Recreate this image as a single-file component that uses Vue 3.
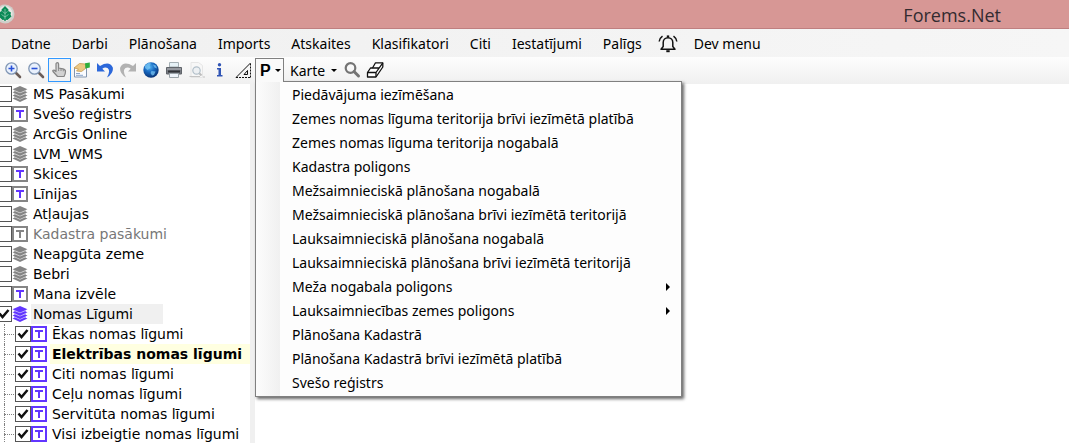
<script setup>
import { ref } from 'vue'

const menus = ['Datne', 'Darbi', 'Plānošana', 'Imports', 'Atskaites', 'Klasifikatori', 'Citi', 'Iestatījumi', 'Palīgs']

const layers = ref([
  { name: 'MS Pasākumi', icon: 'stack' },
  { name: 'Svešo reģistrs', icon: 'text' },
  { name: 'ArcGis Online', icon: 'stack' },
  { name: 'LVM_WMS', icon: 'stack' },
  { name: 'Skices', icon: 'text' },
  { name: 'Līnijas', icon: 'text' },
  { name: 'Atļaujas', icon: 'stack' },
  { name: 'Kadastra pasākumi', icon: 'text', off: true },
  { name: 'Neapgūta zeme', icon: 'stack' },
  { name: 'Bebri', icon: 'stack' },
  { name: 'Mana izvēle', icon: 'text' },
  { name: 'Nomas Līgumi', icon: 'stack', on: true, selected: true },
  { name: 'Ēkas nomas līgumi', icon: 'text', on: true, child: true },
  { name: 'Elektrības nomas līgumi', icon: 'text', on: true, child: true, active: true },
  { name: 'Citi nomas līgumi', icon: 'text', on: true, child: true },
  { name: 'Ceļu nomas līgumi', icon: 'text', on: true, child: true },
  { name: 'Servitūta nomas līgumi', icon: 'text', on: true, child: true },
  { name: 'Visi izbeigtie nomas līgumi', icon: 'text', on: true, child: true },
])

const actions = [
  { name: 'Piedāvājuma iezīmēšana' },
  { name: 'Zemes nomas līguma teritorija brīvi iezīmētā platībā' },
  { name: 'Zemes nomas līguma teritorija nogabalā' },
  { name: 'Kadastra poligons' },
  { name: 'Mežsaimnieciskā plānošana nogabalā' },
  { name: 'Mežsaimnieciskā plānošana brīvi iezīmētā teritorijā' },
  { name: 'Lauksaimnieciskā plānošana nogabalā' },
  { name: 'Lauksaimnieciskā plānošana brīvi iezīmētā teritorijā' },
  { name: 'Meža nogabala poligons', sub: true },
  { name: 'Lauksaimniecības zemes poligons', sub: true },
  { name: 'Plānošana Kadastrā' },
  { name: 'Plānošana Kadastrā brīvi iezīmētā platībā' },
  { name: 'Svešo reģistrs' },
]
</script>

<template>
  <div class="window">
    <header class="titlebar">
      <svg class="logo" width="20" height="20" viewBox="0 0 20 20">
        <circle cx="10" cy="10" r="9.500" fill="#cfcfca" />
        <circle cx="10" cy="9.500" r="7.500" fill="#e8e8e4" />
        <path d="M10 2 13.500 5.500 13.300 7 16 8.500 15.500 10.500 16.500 12.500 12.500 16 10.700 15.700V17H9.300V15.700L7.500 16 3.500 12.500 4.500 10.500 4 8.500 6.700 7 6.500 5.500Z" fill="#0b8a56" />
        <path d="M10 5V15M10 9.500 7.500 7.500M10 9.500 12.500 7.500M10 13 6.500 10.500M10 13 13.500 10.500" stroke="#b5dccb" stroke-width=".6" fill="none" />
      </svg>
      <h1>Forems.Net</h1>
    </header>

    <nav class="menubar">
      <button v-for="m in menus" :key="m" type="button">{{ m }}</button>
      <button type="button" class="bell" aria-label="Paziņojumi">
        <svg width="20" height="20" viewBox="0 0 20 20" fill="none" stroke="#111" stroke-width="1.500">
          <path d="M3 15.200H17L14.800 12.500V8.500A4.800 4.800 0 0 0 5.200 8.500V12.500L3 15.200Z" stroke-linejoin="round" />
          <path d="M8.300 17.200H11.700" stroke-width="2" /><path d="M8.800 2.400H11.200" stroke-width="2" />
          <path d="M4.500 2.200Q1.500 4.300 1.200 7.500M15.500 2.200Q18.500 4.300 18.800 7.500" />
        </svg>
      </button>
      <button type="button">Dev menu</button>
    </nav>

    <div class="toolbar">
      <button type="button" class="tool" aria-label="Tuvināt">
        <svg width="18" height="18" viewBox="0 0 18 18">
          <path d="M11.500 11.500 16 16" stroke="#6b5d58" stroke-width="2.600" stroke-linecap="round" />
          <circle cx="7.500" cy="7.500" r="5.700" fill="#e9f1fd" stroke="#8197b5" stroke-width="1.300" />
          <path d="M4.500 7.500H10.500M7.500 4.500V10.500" stroke="#2850d8" stroke-width="1.600" />
        </svg>
      </button>
      <button type="button" class="tool" aria-label="Tālināt">
        <svg width="18" height="18" viewBox="0 0 18 18">
          <path d="M11.500 11.500 16 16" stroke="#6b5d58" stroke-width="2.600" stroke-linecap="round" />
          <circle cx="7.500" cy="7.500" r="5.700" fill="#e9f1fd" stroke="#8197b5" stroke-width="1.300" />
          <path d="M4.500 7.500H10.500" stroke="#2850d8" stroke-width="1.600" />
        </svg>
      </button>
      <button type="button" class="tool pressed" aria-label="Pārvietot">
        <svg width="18" height="18" viewBox="0 0 18 18">
          <path d="M6 9.500V3A1.300 1.300 0 0 1 8.600 3V7L13 7.800Q15.600 8.300 15.500 10.500 15.500 13 14 15.500H7.500L3 10.500Q2.300 9 4 9L6 10.500Z" fill="#d2d2d2" stroke="#858585" stroke-width="1.200" stroke-linejoin="round" />
          <path d="M8.600 7V10M11 7.600V10M13.300 8.200V10.300" stroke="#858585" stroke-width=".9" />
        </svg>
      </button>
      <button type="button" class="tool" aria-label="Īpašības">
        <svg width="18" height="18" viewBox="0 0 18 18">
          <path d="M1.500 6.500H13.500V16H1.500Z" fill="#fafcff" stroke="#8295ae" />
          <path d="M3 12.500H7M3 14.300H10" stroke="#8aa5cb" />
          <path d="M1 7 6.500 2.500 12.500 3V7.500L8.500 10.500 3.500 10 5.500 8Z" fill="#ecc884" stroke="#c69a50" stroke-width=".8" />
          <path d="M12 2.200 16.800 1.500V6.500L12.500 7.500Z" fill="#2fae3d" />
        </svg>
      </button>
      <button type="button" class="tool" aria-label="Atsaukt">
        <svg width="18" height="18" viewBox="0 0 18 18">
          <path d="M1 2V10.500H9L6.300 7.800Q9 5.500 11.500 7 15 9.500 11 16.500 17.800 12 16.800 6.500 13.500 -.5 4 5Z" fill="#2c68da" />
        </svg>
      </button>
      <button type="button" class="tool" aria-label="Atkārtot">
        <svg width="18" height="18" viewBox="0 0 18 18">
          <path d="M17 2V10.500H9L11.700 7.800Q9 5.500 6.500 7 3 9.500 7 16.500 .2 12 1.200 6.500 4.500 -.5 14 5Z" fill="#b2b2b2" />
        </svg>
      </button>
      <button type="button" class="tool" aria-label="Pilns skats">
        <svg width="18" height="18" viewBox="0 0 18 18">
          <defs>
            <radialGradient id="sea" cx=".4" cy=".3" r=".7"><stop offset="0" stop-color="#55b4f2" /><stop offset=".5" stop-color="#1767bf" /><stop offset="1" stop-color="#0a3476" /></radialGradient>
          </defs>
          <circle cx="9" cy="9" r="7.700" fill="url(#sea)" />
          <path d="M3 4.500 6.500 2 9 2.500 7.500 5 8.500 7 5.500 9 3 7ZM11 3.500 14 4.500 15 7.500 12.500 6.500ZM9.500 10 13.500 10.500 12 14 10 14.500 8.500 12Z" fill="#78c6f4" opacity=".75" />
        </svg>
      </button>
      <button type="button" class="tool" aria-label="Drukāt">
        <svg width="18" height="18" viewBox="0 0 18 18">
          <path d="M4.500 1.500H13.500V6H4.500Z" fill="#e6f1f6" stroke="#a5b0b5" />
          <path d="M1.500 6.500H16.500V13H1.500Z" fill="#777b82" stroke="#60646a" />
          <path d="M2 8H16" stroke="#b3b6bb" /><path d="M3 10.500H15" stroke="#303338" stroke-width="2" />
          <path d="M4.500 12.500H13.500V16.500H4.500Z" fill="#eef4fb" stroke="#9ba4aa" />
        </svg>
      </button>
      <button type="button" class="tool" aria-label="Drukas priekšskatījums">
        <svg width="18" height="18" viewBox="0 0 18 18">
          <path d="M3 1.500H10.500L14.500 4.500V16.500H3Z" fill="#f7f7f7" stroke="#e6e6e6" />
          <path d="M11 12 13.500 14.500" stroke="#bdbdbd" stroke-width="2" />
          <circle cx="8.500" cy="9.500" r="3.700" fill="#edf0f3" stroke="#b3c0ca" stroke-width="1.200" />
          <path d="M1.500 15.500H12M15 16H17" stroke="#c4c4c4" />
        </svg>
      </button>
      <button type="button" class="tool" aria-label="Informācija">
        <svg width="18" height="18" viewBox="0 0 18 18" fill="#3155b5">
          <circle cx="8.500" cy="3.800" r="1.700" /><path d="M6 7H10V14H11.500V15.500H6V14H7.500V8.500H6Z" />
        </svg>
      </button>
      <button type="button" class="tool" aria-label="Mērīt">
        <svg width="18" height="18" viewBox="0 0 18 18" fill="none" stroke="#111">
          <path d="M16.500 16.500V2M2 16.500H16.500" stroke-dasharray="2 1" /><path d="M2 16.500 16.500 2M10 13.500H13.500V9.500Z" />
        </svg>
      </button>
      <div class="drop">
        <button type="button" class="drop-button" aria-expanded="true"><b>P</b><span class="caret"></span></button>
        <div class="popup" role="menu">
          <button v-for="a in actions" :key="a.name" type="button" role="menuitem">
            <span>{{ a.name }}</span><span v-if="a.sub" class="more"></span>
          </button>
        </div>
      </div>
      <button type="button" class="karte">Karte<span class="caret"></span></button>
      <button type="button" class="tool" aria-label="Meklēt">
        <svg width="18" height="18" viewBox="0 0 18 18" fill="none" stroke="#747474">
          <circle cx="7.500" cy="7" r="4.800" stroke-width="2.200" /><path d="M11 10.500 15.500 15" stroke-width="3" stroke-linecap="round" />
        </svg>
      </button>
      <button type="button" class="tool" aria-label="Dzēst">
        <svg width="18" height="18" viewBox="0 0 18 18" fill="#fff" stroke="#111" stroke-width="1.300" stroke-linejoin="round">
          <path d="M1.500 11.500 4.500 7H6.500L9.500 1.800H16.800V6L10 16H1.500Z" /><path d="M1.500 11.500H10L16.800 1.800M10 11.500V16M6.500 7H13" fill="none" />
        </svg>
      </button>
    </div>

    <main class="body">
      <ul class="tree">
        <li v-for="l in layers" :key="l.name" :class="{ child: l.child, off: l.off, lit: l.on, selected: l.selected, active: l.active }">
          <label>
            <span class="check">
              <input v-model="l.on" type="checkbox">
              <svg v-if="l.on" width="16" height="16" viewBox="0 0 16 16"><path d="M3.500 7.500 6.500 11 12.500 4" fill="none" stroke="#111" stroke-width="2.500" /></svg>
            </span>
            <svg v-if="l.icon === 'stack'" class="icon" width="16" height="16" viewBox="0 0 16 16" fill="currentColor">
              <path d="M8 0 15.500 3.200 8 6.500 .5 3.200Z" />
              <path d="M.5 6.200 3 5.200 8 7.300 13 5.200 15.500 6.200 8 9.700Z" />
              <path d="M.5 9.400 3 8.400 8 10.500 13 8.400 15.500 9.400 8 12.900Z" />
              <path d="M.5 12.600 3 11.600 8 13.700 13 11.600 15.500 12.600 8 16Z" />
              <path d="M8 1 14 3.200V12L8 15 2 12V3.200Z" opacity=".35" />
            </svg>
            <svg v-else class="icon" width="16" height="16" viewBox="0 0 16 16">
              <path d="M1 1H15V15H1Z" fill="#fff" stroke="currentColor" stroke-width="2" />
              <path class="tee" d="M4 5H12M8 5V12" fill="none" stroke-width="2" />
            </svg>
            <span class="name">{{ l.name }}</span>
          </label>
        </li>
      </ul>
      <div class="splitter"></div>
      <section class="map"></section>
    </main>
  </div>
</template>

<style>
body {
  margin: 0;
}
</style>

<style scoped>
.window {
  display: flex;
  flex-direction: column;
  height: 100vh;
  overflow: hidden;
  background: #fff;
  color: #000;
  font: 14px/20px "Noto Sans", "Open Sans", sans-serif;
}
button {
  margin: 0;
  padding: 0;
  border: 0;
  background: none;
  color: inherit;
  font: inherit;
  white-space: nowrap;
}
svg {
  display: block;
  flex: none;
}
.titlebar {
  display: flex;
  align-items: center;
  flex: none;
  box-sizing: border-box;
  height: 29px;
  border-bottom: 1px solid #bf7f80;
  background: #d79795;
}
.logo {
  margin-left: -5px;
}
h1 {
  flex: 1;
  margin: 2px 68px 0 0;
  color: #332b30;
  font: 400 18px/24px "Open Sans", "Noto Sans", sans-serif;
  text-align: right;
}
.menubar {
  display: flex;
  align-items: center;
  flex: none;
  gap: 21px;
  height: 28px;
  padding: 1px 11px 0;
  box-sizing: border-box;
  background: linear-gradient(90deg, #f0f0f0, #f6f6f6);
}
.bell {
  margin: 0 -5px;
}
.toolbar {
  display: flex;
  flex: none;
  height: 27px;
  padding-left: 2px;
  background: linear-gradient(#fdfdfd, #f0f0f0);
}
.tool {
  display: flex;
  align-items: center;
  justify-content: center;
  box-sizing: border-box;
  width: 23px;
  height: 25px;
  padding-right: 2px;
}
.pressed {
  height: 24px;
  margin-top: 1px;
  border: 1px solid #3399ff;
  background: #f2f2f2;
}
.caret {
  border: 3px solid transparent;
  border-top-color: #000;
  border-bottom: 0;
}
.drop {
  position: relative;
  padding-top: 1px;
}
.drop-button {
  position: relative;
  z-index: 2;
  display: flex;
  align-items: center;
  gap: 4px;
  box-sizing: border-box;
  width: 29px;
  height: 24px;
  padding-left: 4px;
  border: 1px solid #808080;
  border-bottom: 0;
  background: #fafafa;
}
.drop-button b {
  font: 700 16px/20px "Liberation Sans", sans-serif;
}
.popup {
  position: absolute;
  top: 24px;
  left: 0;
  z-index: 1;
  display: flex;
  flex-direction: column;
  box-sizing: border-box;
  width: 427px;
  padding: 1px;
  border: 1px solid #808080;
  background: linear-gradient(90deg, #fcfcfc, #f0f0f0) 0 0 / 24px 100% no-repeat #fdfdfd;
  box-shadow: 2px 2px 3px #0009;
}
.popup button {
  display: flex;
  align-items: center;
  justify-content: space-between;
  height: 24px;
  padding: 0 10px 0 35px;
}
.more {
  border: 4px solid transparent;
  border-left-color: #000;
  border-right: 0;
}
.karte {
  display: flex;
  align-items: center;
  gap: 6px;
  height: 27px;
  padding: 0 4px 0 6px;
}
.body {
  display: flex;
  flex: 1;
  min-height: 0;
}
.tree {
  flex: none;
  width: 250px;
  margin: 0;
  padding: 0;
  overflow: hidden;
  list-style: none;
  font: 14px/20px "DejaVu Sans", sans-serif;
}
li {
  position: relative;
  height: 20px;
  color: #858585;
}
li.lit {
  color: #6236ff;
}
label {
  display: flex;
  align-items: center;
  height: 20px;
  margin-left: -4px;
}
.child label {
  margin-left: 15px;
}
.child::before {
  position: absolute;
  top: 0;
  left: 4px;
  width: 10px;
  height: 10px;
  border-bottom: 1px dotted #808080;
  content: "";
}
.child::after {
  position: absolute;
  top: 0;
  left: 4px;
  height: 20px;
  border-left: 1px dotted #808080;
  content: "";
}
.check {
  position: relative;
  flex: none;
  width: 16px;
  height: 16px;
}
.check input {
  display: block;
  box-sizing: border-box;
  width: 16px;
  height: 16px;
  margin: 0;
  border: 1px solid #555;
  background: #fff;
  appearance: none;
}
.check svg {
  position: absolute;
  inset: 0;
  pointer-events: none;
}
.tee {
  stroke: #6236ff;
}
.off .tee {
  stroke: #858585;
}
.name {
  height: 20px;
  margin-left: 3px;
  padding: 0 2px;
  color: #000;
  white-space: nowrap;
}
.off .name {
  color: #777;
}
.selected .name {
  padding-right: 30px;
  background: #f0f0f0;
}
.active .name {
  flex: 1;
  background: #ffffe1;
  font-weight: 700;
}
.splitter {
  flex: none;
  width: 5px;
  background: #f0f0f0;
}
.map {
  flex: 1;
  background: #fff;
}
</style>
